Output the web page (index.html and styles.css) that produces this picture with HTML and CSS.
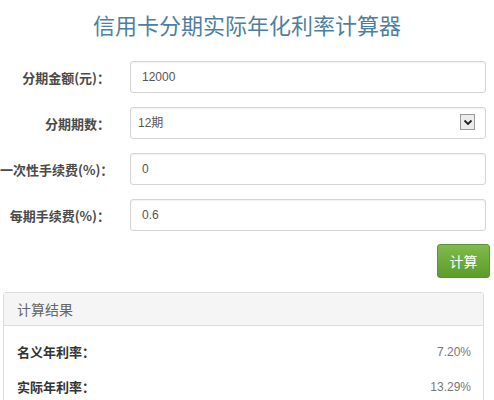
FILE: index.html
```html
<!DOCTYPE html>
<html>
<head>
    <meta charset="utf-8">
    <link rel="stylesheet" href="styles.css">
</head>
<body>
    <h1 class="title">信用卡分期实际年化利率计算器</h1>
    <form class="calc" onsubmit="return false">
        <div class="row">
            <label for="amount">分期金额(元)：</label>
            <input id="amount" class="field" type="text" value="12000">
        </div>
        <div class="row">
            <label for="periods">分期期数：</label>
            <div class="select-wrap">
                <select id="periods" class="field select">
                    <option>3期</option>
                    <option>6期</option>
                    <option selected>12期</option>
                    <option>18期</option>
                    <option>24期</option>
                </select>
                <span class="arrow">
                    <svg width="10" height="7" viewBox="0 0 10 7"><path d="M1.5 1.5 L5 5 L8.5 1.5" fill="none" stroke="#222" stroke-width="1.8"/></svg>
                </span>
            </div>
        </div>
        <div class="row">
            <label for="oneoff">一次性手续费(%)：</label>
            <input id="oneoff" class="field" type="text" value="0">
        </div>
        <div class="row">
            <label for="monthly">每期手续费(%)：</label>
            <input id="monthly" class="field" type="text" value="0.6">
        </div>
        <div class="actions">
            <button class="btn" type="button">计算</button>
        </div>
    </form>
    <div class="panel">
        <div class="panel-head">计算结果</div>
        <div class="panel-body">
            <div class="result">
                <span class="result-label">名义年利率：</span>
                <span class="result-value" id="nominal">7.20%</span>
            </div>
            <div class="result">
                <span class="result-label">实际年利率：</span>
                <span class="result-value" id="real">13.29%</span>
            </div>
        </div>
    </div>
</body>
</html>
```

FILE: styles.css
```css
body {
    margin: 0;
    font-family: "Noto Sans CJK SC", "Liberation Sans", sans-serif;
    background-color: #fff;
    color: #333;
}
.title {
    margin: 0;
    font-size: 22px;
    font-weight: normal;
    line-height: 48px;
    color: #4f7fa0;
    text-align: center;
}
.calc {
    display: flex;
    flex-direction: column;
    gap: 14px;
    margin-top: 13px;
    padding-right: 8px;
}
.row {
    display: grid;
    grid-template-columns: 110px 1fr;
    gap: 20px;
    align-items: center;
}
.row label {
    font-size: 13px;
    font-weight: bold;
    color: #4a4a4a;
    text-align: right;
    white-space: nowrap;
}
.field {
    box-sizing: border-box;
    width: 100%;
    height: 32px;
    padding: 0 11px;
    font-family: "Liberation Sans", "Noto Sans CJK SC", sans-serif;
    font-size: 12px;
    color: #555;
    background: #fff;
    border: 1px solid #d4d4d4;
    border-radius: 3px;
    box-shadow: inset 0 1px 2px rgba(0, 0, 0, 0.06);
    outline: none;
}
.select-wrap {
    position: relative;
}
.select {
    appearance: none;
    -webkit-appearance: none;
    padding-left: 7px;
}
.arrow {
    position: absolute;
    right: 11px;
    top: 7px;
    width: 15px;
    height: 16px;
    box-sizing: border-box;
    display: flex;
    align-items: center;
    justify-content: center;
    background: #ececec;
    border: 1px solid #9a9a9a;
    pointer-events: none;
}
.actions {
    display: flex;
    justify-content: flex-end;
    margin-top: -1px;
    margin-right: -4px;
}
.btn {
    width: 53px;
    height: 34px;
    padding: 0;
    font-family: "Noto Sans CJK SC", sans-serif;
    font-size: 14px;
    color: #fff;
    background: linear-gradient(#80bb4c, #5c9b2c);
    border: 1px solid #5a9530;
    border-radius: 3px;
    cursor: pointer;
}
.panel {
    margin: 14px 10px 0 3px;
    border: 1px solid #dcdcdc;
    border-radius: 3px;
}
.panel-head {
    height: 32px;
    line-height: 32px;
    padding-left: 13px;
    font-size: 14px;
    color: #666;
    background: #f5f5f5;
    border-bottom: 1px solid #dcdcdc;
}
.panel-body {
    padding: 8px 12px 8px 13px;
}
.result {
    display: flex;
    justify-content: space-between;
    align-items: center;
    height: 35px;
}
.result-label {
    font-size: 13px;
    font-weight: bold;
    color: #333;
}
.result-value {
    font-family: "Liberation Sans", sans-serif;
    font-size: 12px;
    color: #777;
}
```
